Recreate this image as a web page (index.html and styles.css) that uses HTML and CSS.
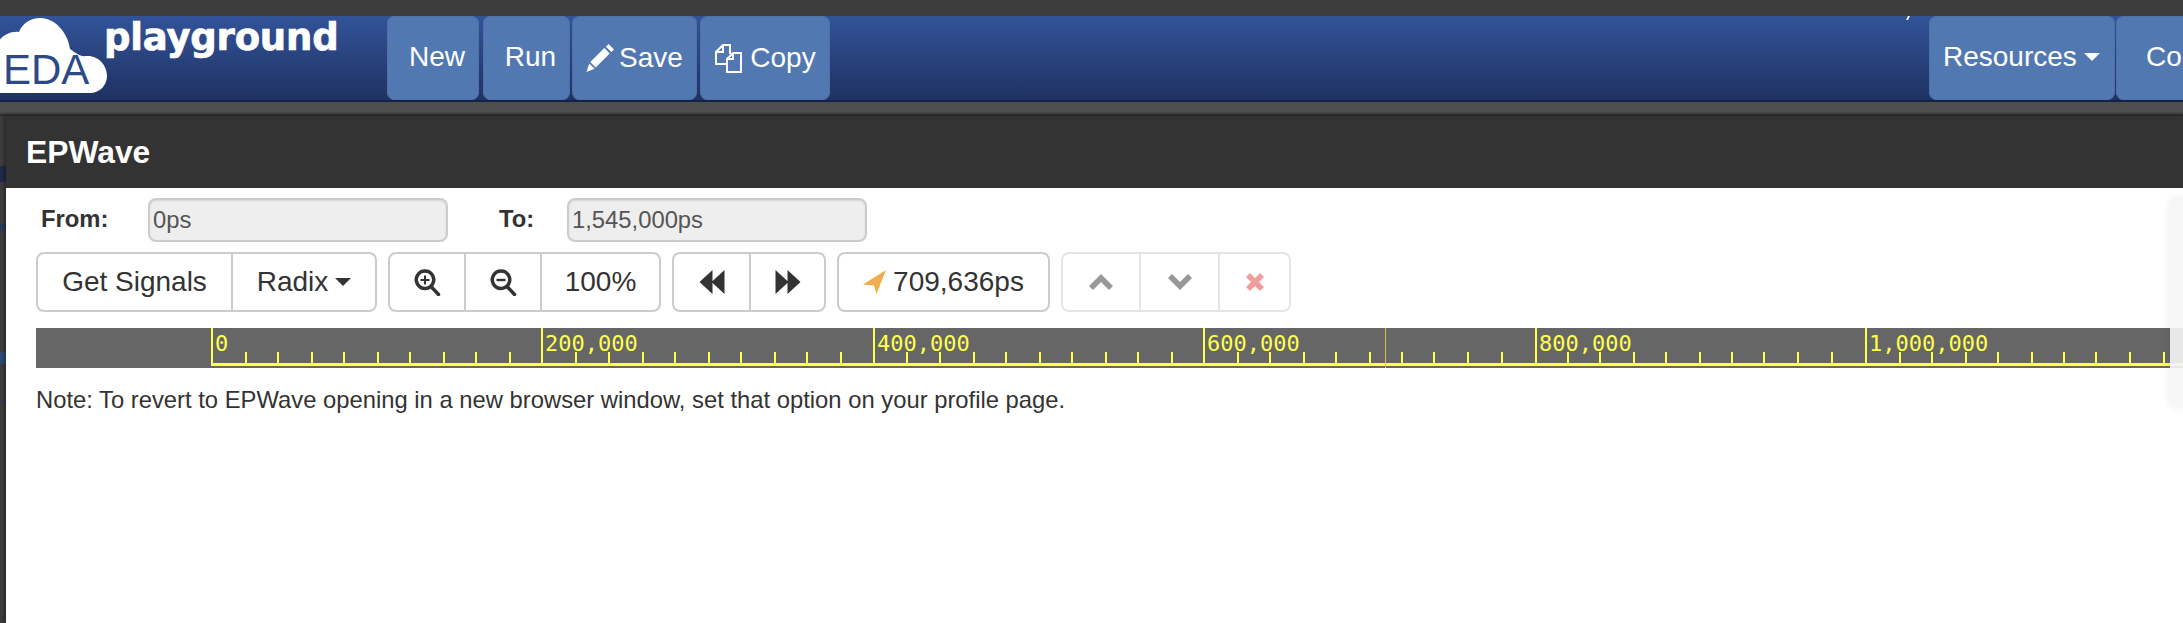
FILE: index.html
```html
<!DOCTYPE html>
<html lang="en">
<head>
  <meta charset="UTF-8" />
  <title>EDA Playground - EPWave</title>
  <link rel="stylesheet" href="styles.css">
</head>
<body>
  <header class="navbar">
    <div class="brand">
      <svg class="cloud" width="110" height="84" viewBox="0 0 110 84">
        <path fill="#fff" d="M-2 77H90C100 77 107 69 107 60C107 49 98 39 86 40C80 41 76 37 70 33C68 16 54 2 41 2C30 2 22 8 19 16C10 15 2 20 -2 26Z"/>
      </svg>
      <span class="brand-eda">EDA</span>
      <span class="brand-name">playground</span>
    </div>
    <a class="nav-btn btn-new">New</a>
    <a class="nav-btn btn-run">Run</a>
    <a class="nav-btn btn-save">
      <svg width="28" height="28" viewBox="0 0 26 26"><path fill="#fff" d="M21 0l5 5-2.500 2.500-5-5zM17 3.800l5 5-13 13-5-5zM3 18l5 5-7.500 3z"/></svg>
      Save
    </a>
    <a class="nav-btn btn-copy">
      <svg width="28" height="30" viewBox="0 0 28 30"><path fill="none" stroke="#fff" stroke-width="2" d="M12 21H2V9l7-7h7v9M9 2v7H2M13 16l6-6h8v19H13zM19 10v6h-6"/></svg>
      Copy
    </a>
    <div class="nav-right">
      <a class="nav-btn btn-resources">Resources <span class="caret"></span></a>
      <a class="nav-btn">Contact</a>
    </div>
    <span class="nav-tail"></span>
  </header>
  <div class="navbar-shadow"></div>

  <div class="backdrop">
    <section class="modal">
      <h1 class="modal-title">EPWave</h1>
      <div class="modal-body">
        <div class="range-row">
          <label class="range-label from-label">From:</label>
          <input class="range-input" type="text" value="0ps" disabled />
          <label class="range-label to-label">To:</label>
          <input class="range-input" type="text" value="1,545,000ps" disabled />
        </div>

        <div class="tool-row">
          <div class="btn-group">
            <button class="tool-btn w-signals">Get Signals</button>
            <button class="tool-btn w-radix">Radix <span class="caret dark"></span></button>
          </div>
          <div class="btn-group">
            <button class="tool-btn w-zoom-in">
              <svg width="27" height="27" viewBox="0 0 27 27"><path fill="none" stroke="#333" stroke-width="3.500" stroke-linecap="round" d="M11 2a8.700 8.700 0 1 0 .01 0zM17.500 18l7 7.500"/><path fill="#333" d="M10 6.500h2v3.500h3.500v2H12v3.500h-2V12H6.500v-2H10z"/></svg>
            </button>
            <button class="tool-btn w-zoom-out">
              <svg width="27" height="27" viewBox="0 0 27 27"><path fill="none" stroke="#333" stroke-width="3.500" stroke-linecap="round" d="M11 2a8.700 8.700 0 1 0 .01 0zM17.500 18l7 7.500"/><path fill="#333" d="M6.500 9.800h9v2.400h-9z"/></svg>
            </button>
            <button class="tool-btn w-zoom">100%</button>
          </div>
          <div class="btn-group">
            <button class="tool-btn w-back">
              <svg width="26" height="24" viewBox="0 0 26 24"><path fill="#333" d="M13.500 0v24L0.500 12zM25.500 0v24L12.500 12z"/></svg>
            </button>
            <button class="tool-btn w-forward">
              <svg width="26" height="24" viewBox="0 0 26 24"><path fill="#333" d="M0.500 0v24l13-12zM12.500 0v24l13-12z"/></svg>
            </button>
          </div>
          <div class="btn-group">
            <button class="tool-btn w-cursor">
              <svg width="23" height="24" viewBox="0 0 23 24"><path fill="#f0ad4e" d="M23 0L0 14.500l11 1 2.500 8.500z"/></svg>
              709,636ps
            </button>
          </div>
          <div class="btn-group is-disabled">
            <button class="tool-btn w-up">
              <svg width="26" height="18" viewBox="0 0 26 18"><path fill="#333" d="M13 1l12 12-4 4-8-8-8 8-4-4z"/></svg>
            </button>
            <button class="tool-btn w-down">
              <svg width="26" height="18" viewBox="0 0 26 18"><path fill="#333" d="M13 17L1 5l4-4 8 8 8-8 4 4z"/></svg>
            </button>
            <button class="tool-btn w-close">
              <svg width="20" height="20" viewBox="0 0 20 20"><path fill="#e0403a" d="M5 1l5 5 5-5 4 4-5 5 5 5-4 4-5-5-5 5-4-4 5-5-5-5z"/></svg>
            </button>
          </div>
        </div>

        <div class="wave">
          <svg class="wave-ruler" width="2147" height="40" viewBox="0 0 2147 40">
            <path fill="none" stroke="#ffff4d" stroke-width="2" d="M176 0v37M506 0v37M838 0v37M1168 0v37M1500 0v37M1830 0v37"/>
            <path fill="none" stroke="#ffff4d" stroke-width="2" d="M210 24v13M242 24v13M276 24v13M308 24v13M342 24v13M374 24v13M408 24v13M440 24v13M474 24v13M540 24v13M573 24v13M607 24v13M639 24v13M673 24v13M705 24v13M739 24v13M771 24v13M805 24v13M871 24v13M904 24v13M938 24v13M970 24v13M1004 24v13M1036 24v13M1070 24v13M1102 24v13M1136 24v13M1202 24v13M1234 24v13M1268 24v13M1300 24v13M1334 24v13M1366 24v13M1398 24v13M1432 24v13M1466 24v13M1532 24v13M1564 24v13M1598 24v13M1630 24v13M1664 24v13M1696 24v13M1728 24v13M1762 24v13M1796 24v13M1864 24v13M1896 24v13M1930 24v13M1962 24v13M1996 24v13M2028 24v13M2060 24v13M2094 24v13M2128 24v13"/>
            <path fill="none" stroke="#ffff4d" stroke-width="3" d="M175 36.500H2147"/>
            <path fill="none" stroke="#e9b44c" stroke-width="1" d="M1349.500 0v40"/>
            <g class="ruler-text">
              <text x="179" y="23">0</text>
              <text x="509" y="23">200,000</text>
              <text x="841" y="23">400,000</text>
              <text x="1171" y="23">600,000</text>
              <text x="1503" y="23">800,000</text>
              <text x="1833" y="23">1,000,000</text>
            </g>
          </svg>
        </div>

        <p class="note">Note: To revert to EPWave opening in a new browser window, set that option on your profile page.</p>
        <div class="side-panel"></div>
      </div>
    </section>
  </div>
</body>
</html>
```

FILE: styles.css
```css
* {
  box-sizing: border-box;
}
html, body {
  margin: 0;
  height: 623px;
  overflow: hidden;
}
body {
  background: #3d3d3d;
  font-family: "Liberation Sans", Arial, sans-serif;
  font-size: 23.8px;
  color: #333;
  border-top: 16px solid #3c3c3c;
}
.navbar {
  position: relative;
  display: flex;
  height: 86px;
  padding-bottom: 2px;
  background: linear-gradient(#325399, #1f3262);
  border-bottom: 2px solid #14224a;
  white-space: nowrap;
}
.brand {
  position: relative;
  flex: 0 0 387px;
}
.cloud {
  position: absolute;
  left: 0;
  top: 0;
}
.brand-eda {
  position: absolute;
  left: 3px;
  top: 30px;
  font-size: 42px;
  line-height: 48px;
  color: #2c4a88;
}
.brand-name {
  position: absolute;
  left: 104px;
  top: 0;
  font-family: "DejaVu Sans", sans-serif;
  font-weight: bold;
  font-size: 37px;
  line-height: 44px;
  letter-spacing: -0.2px;
  color: #fff;
  -webkit-text-stroke: 0.7px #fff;
}
.nav-btn {
  display: flex;
  align-items: center;
  gap: 5px;
  flex-shrink: 0;
  height: 84px;
  padding: 0 20px 2px;
  font-size: 28px;
  color: #fff;
  background: #5278b2;
  border-radius: 8px;
  box-shadow: inset 0 0 0 1px #4d71a8;
}
.btn-new { width: 92px; margin-right: 4px; justify-content: center; padding: 0 0 2px 8px; }
.btn-run { width: 87px; margin-right: 2px; justify-content: center; padding: 0 0 2px 8px; }
.btn-save { width: 125px; margin-right: 3px; justify-content: center; padding: 0; }
.btn-copy { width: 130px; margin-right: 4px; justify-content: center; padding: 0; gap: 8px; }
.nav-right {
  display: flex;
  margin-left: 1095px;
}
.nav-right .nav-btn {
  margin-right: 1px;
  padding: 0 30px 2px;
}
.nav-right .btn-resources {
  width: 186px;
  padding: 0 14px 2px;
}
.nav-tail {
  position: absolute;
  left: 1907px;
  top: 0;
  width: 2px;
  height: 4px;
  background: #fff;
  transform: skewX(-25deg);
}
.caret {
  display: inline-block;
  width: 0;
  height: 0;
  margin-left: 2px;
  border-top: 8px solid #fff;
  border-left: 8px solid transparent;
  border-right: 8px solid transparent;
}
.caret.dark {
  border-top-color: #333;
}
.navbar-shadow {
  height: 14px;
  background: linear-gradient(#4e4e4e 70%, #3a3a3a 85%, #222);
}
.backdrop {
  padding-left: 6px;
  background: linear-gradient(#3d3d3d 50px, #1f2a4a 50px, #1f2a4a 66px, #3d3d3d 66px, #3d3d3d 108px, #2a3a5e 108px, #2a3a5e 114px, #3d3d3d 114px, #3d3d3d 236px, #2c4a70 236px, #2c4a70 248px, #3d3d3d 248px, #3d3d3d 284px, #30394f 284px, #30394f 286px, #3d3d3d 286px);
}
.modal {
  background: #fff;
  height: 507px;
  box-shadow: -2px 0 3px rgba(0, 0, 0, 0.35);
}
.modal-title {
  margin: 0;
  height: 72px;
  padding-left: 20px;
  background: #333;
  color: #fff;
  font-size: 31.8px;
  line-height: 72px;
}
.modal-body {
  position: relative;
  padding: 10px 0 0 30px;
}
.range-row {
  display: flex;
  align-items: center;
  height: 44px;
}
.range-label {
  padding-bottom: 2px;
  font-weight: bold;
}
.from-label {
  width: 112px;
  padding-left: 5px;
}
.to-label {
  width: 119px;
  padding-left: 51px;
}
.range-input {
  width: 300px;
  height: 44px;
  padding: 0 3px;
  font: 23.8px "Liberation Sans", Arial, sans-serif;
  color: #555;
  background: #eee;
  border: 2.500px solid #ccc;
  border-radius: 8px;
  box-shadow: inset 0 1px 2px rgba(0, 0, 0, 0.1);
}
.tool-row {
  display: flex;
  gap: 11px;
  height: 60px;
  margin-top: 10px;
}
.btn-group {
  display: flex;
  height: 60px;
  border: 2.500px solid #ccc;
  border-radius: 8px;
  background: #fff;
}
.btn-group.is-disabled {
  opacity: 0.5;
}
.tool-btn {
  display: flex;
  align-items: center;
  justify-content: center;
  gap: 5px;
  padding: 0;
  height: 100%;
  font: 28px "Liberation Sans", Arial, sans-serif;
  color: #333;
  background: none;
  border: 0;
  border-left: 2px solid #ccc;
}
.tool-btn:first-child {
  border-left: 0;
}
.w-signals { width: 193px; }
.w-radix { width: 144px; }
.w-zoom-in { width: 74px; }
.w-zoom-out { width: 76px; }
.w-zoom { width: 119px; }
.w-back { width: 75px; }
.w-forward { width: 75px; }
.w-cursor { width: 209px; gap: 7px; }
.w-up { width: 76px; }
.w-down { width: 79px; }
.w-close { width: 71px; }
.wave {
  width: 2147px;
  height: 40px;
  margin-top: 16px;
  background: #666;
}
.wave-ruler {
  display: block;
}
.ruler-text {
  font-family: "DejaVu Sans Mono", monospace;
  font-size: 22px;
  fill: #ffff4d;
}
.note {
  margin: 19px 0 0 0;
  font-size: 23.8px;
  line-height: 26px;
}
.side-panel {
  position: absolute;
  top: 10px;
  right: 0;
  width: 13px;
  height: 209px;
  background: rgba(245, 245, 245, 0.91);
  border-radius: 4px 0 0 4px;
  box-shadow: 0 0 8px rgba(0, 0, 0, 0.08);
}
```
